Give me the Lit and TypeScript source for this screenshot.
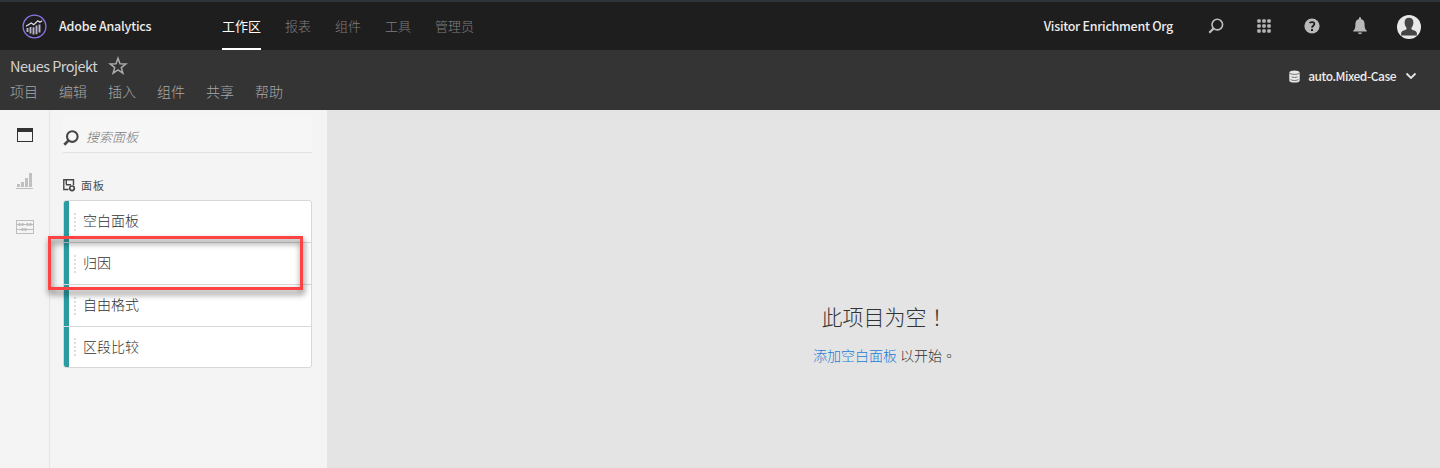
import { LitElement, html, css, svg } from "lit";
import { customElement } from "lit/decorators.js";

const NAV = ["工作区", "报表", "组件", "工具", "管理员"];
const MENU = ["项目", "编辑", "插入", "组件", "共享", "帮助"];
const PANELS = ["空白面板", "归因", "自由格式", "区段比较"];

const logo = html`<svg class="logo" width="25" height="25" viewBox="0 0 25 25" fill="none">
  <circle cx="12.5" cy="12.5" r="11.4" stroke="#8f74ea" stroke-width="1.3" />
  <path d="M5.500 14v4M8.500 13v6.500M11.500 13.200v7.300M14.500 11.500v8.800M17.500 10.500v8" stroke="#b9b3cb" stroke-width="1.900" />
  <path d="M4 12.300L9.300 8.900l2.400 1.800 4.200-4 2 1.600 2.200-1.500" stroke="#e4e0f0" stroke-width="1.200" />
</svg>`;

const star = html`<svg class="star" width="20" height="20" viewBox="0 0 20 20" fill="none">
  <path d="M10 2.200l2 5.500 5.900.2-4.600 3.700 1.600 5.600L10 13.900l-4.900 3.300 1.600-5.600L2.100 7.900 8 7.700z" stroke="#a9a9a9" stroke-width="1.500" />
</svg>`;

const magnifier = (cls: string, color: string, width: number) => html`<svg class=${cls} width="16" height="16" viewBox="0 0 16 16" fill="none" stroke=${color}>
  <circle cx="9.300" cy="6.600" r="5.300" stroke-width=${width} />
  <path d="M5.600 10.400L1.300 14.700" stroke-width=${width + 0.6} />
</svg>`;

const grid = html`<svg class="grid" width="14" height="14" viewBox="0 0 14 14" fill="#b4b4b4">
  ${[0, 5, 10].map((y) => [0, 5, 10].map((x) => svg`<rect x=${x + 0.2} y=${y + 0.2} width="3.600" height="3.600" rx="1" />`))}
</svg>`;

const help = html`<svg class="help" width="16" height="16" viewBox="0 0 16 16" fill="none">
  <circle cx="8" cy="8" r="7.600" fill="#bababa" />
  <path d="M5.700 5.200C6.300 3.700 10.500 3.600 10.300 6.100 10.200 7.700 8 7.800 8 9.800" stroke="#1e1e1e" stroke-width="1.800" />
  <rect x="7" y="11" width="2" height="2" fill="#1e1e1e" />
</svg>`;

const bell = html`<svg class="bell" width="14" height="18" viewBox="0 0 14 18" fill="#b8b8b8">
  <path d="M6 2V.8C6 .2 8 .2 8 .8V2c2.600.5 3.600 2.600 3.600 5.500 0 3.500.6 5 2.200 6.200v.8H.2v-.8C1.800 12.500 2.400 11 2.400 7.500 2.400 4.600 3.400 2.500 6 2z" />
  <path d="M5 15.600h4c0 2.200-4 2.200-4 0z" />
</svg>`;

const avatar = html`<svg class="avatar" width="24" height="24" viewBox="0 0 24 24">
  <circle cx="12" cy="12" r="12" fill="#e8e8e8" />
  <path d="M12 2.800c3 0 4.400 2 4.400 4.800 0 2.500-.9 4-1.900 5.200v1.500c1.300 1.100 4.500 1.300 5.200 3.300.3.900.3 1.900.2 3H4.100c-.1-1.100-.1-2.100.2-3 .7-2 3.900-2.200 5.200-3.300v-1.500C8.500 11.600 7.600 10.100 7.600 7.600 7.600 4.800 9 2.800 12 2.800z" fill="#454545" />
</svg>`;

const database = html`<svg class="database" width="11" height="13" viewBox="0 0 11 13">
  <path d="M.3 2.600C.3-.3 10.700-.3 10.700 2.600v7.800c0 2.900-10.400 2.900-10.400 0z" fill="#e8e8e8" />
  <path d="M.5 3.200c2 1.600 8 1.600 10 0M2.500 6.900c2 .7 4 .7 6 0M1.500 9.600c2 1.200 6 1.200 8 0" fill="none" stroke="#555" stroke-width=".8" />
</svg>`;

const chevron = html`<svg class="chevron" width="12" height="8" viewBox="0 0 12 8" fill="none">
  <path d="M1.500 1.500L6 6l4.500-4.500" stroke="#e6e6e6" stroke-width="1.800" />
</svg>`;

const panelIcon = html`<svg class="rail-icon" width="18" height="16" viewBox="0 0 18 16">
  <path fill-rule="evenodd" d="M1 1h16v14H1zM2 5v9h14V5z" fill="#323232" />
</svg>`;

const chartIcon = html`<svg class="rail-icon" width="18" height="16" viewBox="0 0 18 16" fill="#c0c0c0">
  <path d="M1 11h3v3H1zM5 9h3v5H5zM9 5h3v9H9zM13 0h3v14h-3zM0 15h17v1H0z" />
</svg>`;

const abacusIcon = html`<svg class="rail-icon" width="18" height="14" viewBox="0 0 18 14" fill="none" stroke="#bdbdbd">
  <rect x=".5" y=".5" width="17" height="13" />
  <path d="M1 4.500h16M1 9.500h16" stroke-width="1" />
  <path d="M3.500 3v3M6.500 3v3M11.500 3v3M14.500 3v3M6.500 8v3M9.500 8v3" stroke-width="1.900" />
</svg>`;

const sectionIcon = html`<svg class="section-icon" width="13" height="13" viewBox="0 0 13 13" fill="none" stroke="#464646">
  <path d="M5.500 10.500H.8V.8h9.700v5.500M3 5.700h5M3.300 5.500V1" stroke-width="1.400" />
  <circle cx="9" cy="9.300" r="2.300" stroke-width="1.700" />
</svg>`;

@customElement("app-root")
export class AppRoot extends LitElement {
  static styles = css`
    :host {
      display: flex;
      flex-direction: column;
      width: 1440px;
      height: 468px;
      overflow: hidden;
      font-family: "Noto Sans CJK SC", "Noto Sans CJK TC", sans-serif;
      font-weight: 300;
      color: #323232;
    }
    * { box-sizing: border-box; }
    svg { display: block; flex: none; }
    .top {
      flex: none;
      height: 50px;
      display: flex;
      align-items: center;
      padding: 0 19px 0 22px;
      background: #1e1e1e;
      border-top: 2px solid #2e3437;
      line-height: 48px;
      white-space: nowrap;
    }
    .brand { width: 163px; margin-left: 12px; color: #ececec; font-size: 12.500px; font-weight: 500; letter-spacing: -0.2px; }
    .nav { display: flex; gap: 24px; height: 48px; flex: 1; font-size: 13px; color: #7e7e7e; }
    .tab { height: 48px; line-height: 47px; }
    .tab.active { color: #fff; font-weight: 400; border-bottom: 2px solid #fff; }
    .org { color: #ececec; font-size: 12.500px; font-weight: 500; letter-spacing: -0.27px; margin-right: 1px; }
    .search { margin-left: 34px; }
    .grid { margin-left: 33px; }
    .help { margin-left: 33px; }
    .bell { margin-left: 33px; }
    .avatar { margin-left: 30px; margin-top: 2px; }
    .sub {
      flex: none;
      height: 60px;
      display: flex;
      justify-content: space-between;
      padding: 0 23px 0 10px;
      background: #343434;
      white-space: nowrap;
    }
    .title-row { display: flex; align-items: center; height: 31px; line-height: 31px; }
    .title { width: 98px; color: #d2d2d2; font-size: 14.500px; font-weight: 400; letter-spacing: -0.53px; }
    .menu { display: flex; gap: 21px; height: 20px; line-height: 20px; font-size: 14px; color: #a8a8a8; }
    .suite { display: flex; align-items: center; height: 52px; line-height: 52px; color: #ececec; font-size: 12px; font-weight: 500; letter-spacing: -0.48px; }
    .suite-name { margin-left: 8px; }
    .chevron { margin-left: 9px; }
    .body { flex: 1; display: flex; min-height: 0; }
    .rail {
      width: 50px;
      display: flex;
      flex-direction: column;
      gap: 30px;
      padding: 17px 0 0 16px;
      background: #f4f4f4;
      border-right: 1px solid #e4e4e4;
    }
    .rail-icon:last-child { margin-top: 1px; }
    .side { width: 277px; padding: 5px 15px 0 13px; background: #f4f4f4; }
    .field {
      display: flex;
      align-items: center;
      gap: 7px;
      height: 38px;
      line-height: 20px;
      padding-top: 6px;
      border-bottom: 1px solid #e1e1e1;
      background: #f6f6f6;
      font-size: 13px;
      font-style: italic;
      color: #7c7c7c;
    }
    .find { margin-top: 3px; }
    .section { display: flex; align-items: center; gap: 5px; margin-top: 22px; height: 20px; line-height: 20px; font-size: 11px; letter-spacing: 1px; font-weight: 400; color: #4b4b4b; }
    .list { margin-top: 5px; height: 168px; border: 1px solid #d8d8d8; border-radius: 3px; overflow: hidden; background: #fff; }
    .item { display: flex; align-items: center; height: 42px; line-height: 39px; border-bottom: 1px solid #d8d8d8; font-size: 14px; }
    .item:last-child { height: 40px; line-height: 38px; border-bottom: 0; }
    .item span { height: 41px; }
    .item:last-child span { height: 40px; }
    .accent { width: 5px; align-self: stretch; background: #2a9ba0; }
    .grip { width: 2px; height: 18px; margin: 0 7px 0 5px; background: repeating-linear-gradient(#dcdcdc 0 2px, transparent 2px 4px); }
    .canvas { flex: 1; display: flex; flex-direction: column; align-items: center; padding-top: 189px; background: #e4e4e4; }
    .empty { height: 34px; line-height: 34px; padding-left: 2px; font-size: 21px; font-weight: 200; }
    .hint { height: 24px; line-height: 24px; margin-top: 10px; padding-left: 2px; font-size: 14px; }
    .link { color: #1d7bd6; }
    .tc { font-family: "Noto Sans CJK TC", sans-serif; }
    .highlight { position: absolute; left: 48px; top: 236px; width: 255px; height: 54px; border: 3px solid #ff4343; filter: drop-shadow(1px 4px 3px rgba(0, 0, 0, 0.6)); }
  `;

  render() {
    return html`
      <header class="top">
        ${logo}
        <div class="brand">Adobe Analytics</div>
        <nav class="nav">${NAV.map((t, i) => html`<div class="tab ${i === 0 ? "active" : ""}">${t}</div>`)}</nav>
        <div class="org">Visitor Enrichment Org</div>
        ${magnifier("search", "#bcbcbc", 1.6)}${grid}${help}${bell}${avatar}
      </header>
      <section class="sub">
        <div>
          <div class="title-row"><div class="title">Neues Projekt</div>${star}</div>
          <div class="menu">${MENU.map((t) => html`<div>${t}</div>`)}</div>
        </div>
        <div class="suite">${database}<div class="suite-name">auto.Mixed-Case</div>${chevron}</div>
      </section>
      <main class="body">
        <aside class="rail">${panelIcon}${chartIcon}${abacusIcon}</aside>
        <aside class="side">
          <div class="field">${magnifier("find", "#464646", 2.1)}<span>搜索面板</span></div>
          <div class="section">${sectionIcon}<span>面板</span></div>
          <div class="list">
            ${PANELS.map((t) => html`<div class="item"><i class="accent"></i><i class="grip"></i><span>${t}</span></div>`)}
          </div>
        </aside>
        <section class="canvas">
          <div class="empty">此项目为空<span class="tc">！</span></div>
          <div class="hint"><span class="link">添加空白面板</span> 以开始<span class="tc">。</span></div>
        </section>
      </main>
      <div class="highlight"></div>
    `;
  }
}
